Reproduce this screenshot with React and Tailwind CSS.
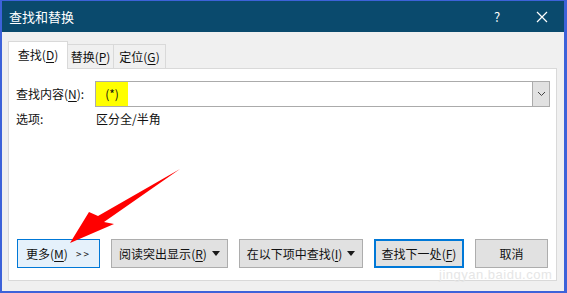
import React from "react";

const font = { fontFamily: '"Noto Sans CJK SC", "Noto Sans", sans-serif' };

function Key({ k }) {
  return (
    <>
      (<span className="underline underline-offset-2">{k}</span>)
    </>
  );
}

function Caret() {
  return <span className="ml-[5px] inline-block w-0 h-0 border-l-[4px] border-r-[4px] border-t-[5px] border-l-transparent border-r-transparent border-t-[#1a1a1a]" />;
}

function Btn({ className, children, width }) {
  return (
    <div
      className={`h-[29px] flex items-center justify-center text-[12px] text-[#111] ${className}`}
      style={{ width }}
    >
      {children}
    </div>
  );
}

export default function App() {
  return (
    <div
      className="w-[567px] h-[293px] flex flex-col bg-[#f0f0f0] border-t border-l-2 border-r-[3px] border-b-2 border-[#3d62d9] relative overflow-hidden"
      style={font}
    >
      {/* Title bar */}
      <div className="h-[31px] shrink-0 bg-[#0a4a6d] flex items-center text-white">
        <span className="ml-[7px] text-[13px]">查找和替换</span>
        <span className="ml-auto text-[13px] w-[20px] text-center">?</span>
        <span className="ml-[26px] mr-[13px] w-[18px] h-[18px] flex items-center justify-center">
          <svg width="12" height="12" viewBox="0 0 12 12">
            <path d="M1 1 L11 11 M11 1 L1 11" stroke="white" strokeWidth="1.2" />
          </svg>
        </span>
      </div>

      {/* Body */}
      <div className="flex-1 pl-[6px] pr-[7px] pt-[9px]">
        {/* Tabs */}
        <div className="flex items-end h-[28px] text-[12px] text-[#111]">
          <div className="w-[60px] h-[28px] bg-white border border-b-0 border-[#d9d9d9] flex items-center justify-center relative z-10 pb-[2px]">
            查找<Key k="D" />
          </div>
          <div className="w-[46px] h-[25px] border border-l-0 border-b-0 border-[#d9d9d9] flex items-center justify-center">
            替换<Key k="P" />
          </div>
          <div className="w-[52px] h-[25px] border border-l-0 border-b-0 border-[#d9d9d9] flex items-center justify-center">
            定位<Key k="G" />
          </div>
        </div>

        {/* Panel */}
        <div className="-mt-px h-[213px] bg-white border border-[#d9d9d9] flex flex-col pl-[7px] pr-[6px] pt-[12px] pb-[12px] text-[12px] text-[#111]">
          <div className="flex items-center h-[26px]">
            <span className="w-[79px]">
              查找内容<Key k="N" />:
            </span>
            <div className="flex-1 h-[26px] border border-[#ababab] flex items-stretch">
              <div className="w-[32px] bg-[#ffff00] flex items-center justify-center">(*)</div>
              <div className="flex-1" />
              <div className="w-[17px] bg-[#e1e1e1] border-l border-[#ababab] flex items-center justify-center">
                <svg width="9" height="6" viewBox="0 0 9 6">
                  <path d="M1 1 L4.5 4.5 L8 1" fill="none" stroke="#444" strokeWidth="1" />
                </svg>
              </div>
            </div>
          </div>
          <div className="flex items-center mt-[2px] h-[20px]">
            <span className="w-[80px]">选项:</span>
            <span>区分全/半角</span>
          </div>

          <div className="flex-1" />

          <div className="flex gap-[11px] pl-[1px]">
            <Btn width={83} className="bg-[#e5f1fb] border border-[#0078d7]">
              更多<Key k="M" />
              <span className="ml-[8px] text-[10px] tracking-[2px]">&gt;&gt;</span>
            </Btn>
            <Btn width={117} className="bg-[#e1e1e1] border border-[#adadad]">
              阅读突出显示<Key k="R" />
              <Caret />
            </Btn>
            <Btn width={124} className="bg-[#e1e1e1] border border-[#adadad]">
              在以下项中查找<Key k="I" />
              <Caret />
            </Btn>
            <Btn width={90} className="bg-[#e1e1e1] border-2 border-[#0078d7]">
              查找下一处<Key k="F" />
            </Btn>
            <Btn width={73} className="bg-[#e1e1e1] border border-[#adadad]">
              取消
            </Btn>
          </div>
        </div>
      </div>

      {/* Watermark */}
      <div className="absolute left-[437px] top-[264px] text-[13px] text-[#e6e6e6] tracking-[0.5px] pointer-events-none" style={{ fontFamily: '"Liberation Sans", sans-serif' }}>
        jingyan.baidu.com
      </div>

      {/* Red arrow annotation */}
      <svg className="absolute left-0 top-0 pointer-events-none" width="567" height="293">
        <path d="M178 168 L96 215 L87 211 L68 242 L112 223 L102 221 Z" fill="#ff0000" />
      </svg>
    </div>
  );
}
